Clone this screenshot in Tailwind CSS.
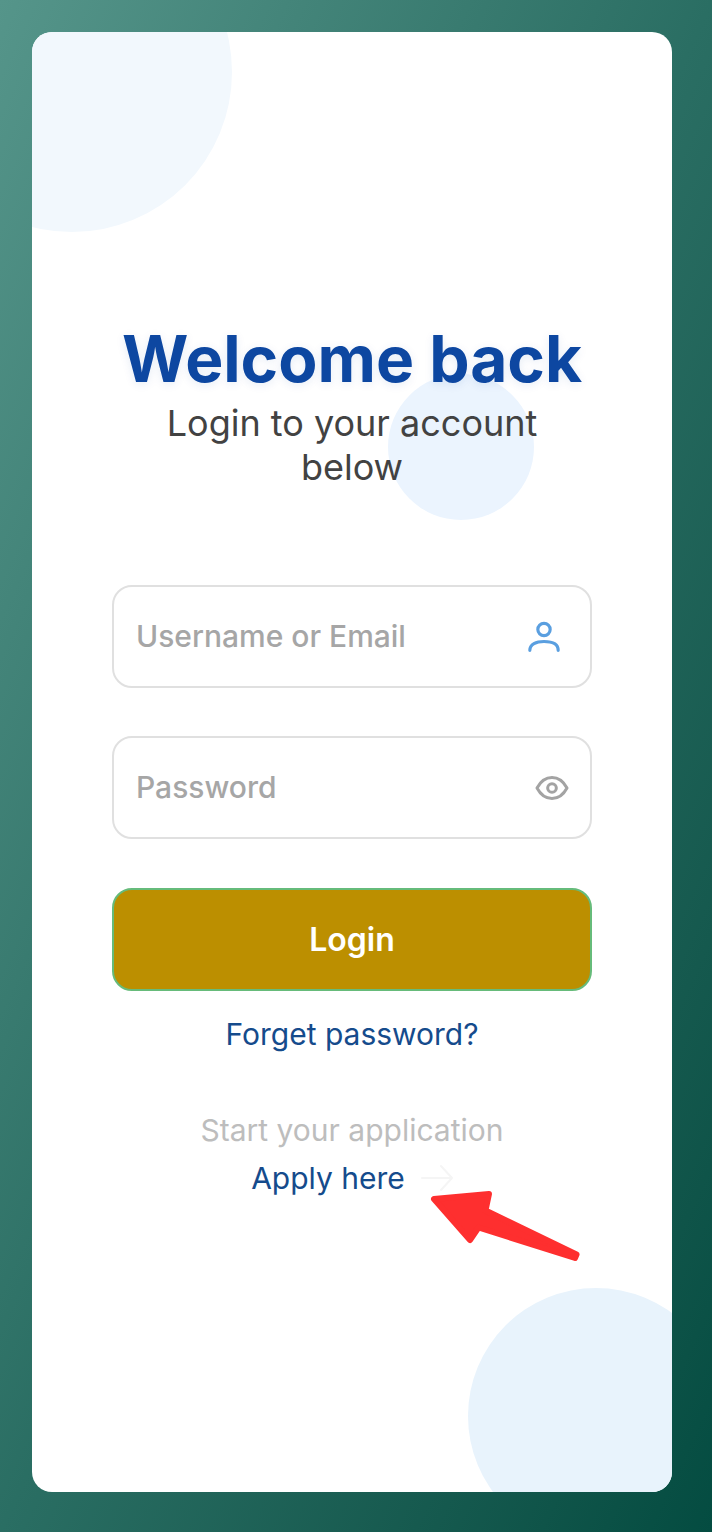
<!DOCTYPE html>
<html lang="en">
<head>
    <meta charset="UTF-8">
    <meta name="viewport" content="width=device-width, initial-scale=1.0">
    <title>Login</title>
    <script src="https://cdn.jsdelivr.net/npm/@tailwindcss/browser@4"></script>
</head>
<body class="font-['Inter',sans-serif]">
    <div class="w-[712px] h-[1532px] pl-8 pt-8 pr-10 pb-10 bg-linear-to-br from-[#55958a] via-[#2a6e63] to-[#044c41]">
        <!-- Card -->
        <div class="relative h-[1460px] bg-white rounded-[20px] overflow-hidden flex flex-col items-center pt-[285px]">
            <div class="absolute -left-[120px] -top-[120px] w-80 h-80 rounded-full bg-[#f2f8fd]"></div>
            <div class="absolute left-[356px] top-[342px] w-[146px] h-[146px] rounded-full bg-[#ebf4fe]"></div>
            <div class="absolute left-[436px] top-[1256px] w-64 h-64 rounded-full bg-[#e8f3fc]"></div>

            <h1 class="relative text-[64px] leading-[84px] font-bold text-[#0d47a1] [text-shadow:0_2px_10px_rgba(13,71,161,0.1)]">Welcome back</h1>
            <p class="relative w-[480px] text-center text-[36px] leading-[44px] text-[#424242]">Login to your account below</p>

            <!-- Form -->
            <div class="relative w-[480px] mt-[96px] flex flex-col">
                <div class="h-[103px] border-2 border-[#e0e0e0] rounded-[20px] bg-white flex items-center justify-between pl-[22px] pr-[26px]">
                    <span class="text-[30px] font-medium text-[#a6a6a6]">Username or Email</span>
                    <svg class="w-10 h-10" viewBox="0 0 24 24" fill="none" stroke="#5a9fe0" stroke-width="1.9" stroke-linecap="round">
                        <circle cx="12" cy="7.500" r="3.700"></circle>
                        <path d="M3.500 20c0-3.800 3.800-5.300 8.500-5.300s8.500 1.500 8.500 5.300"></path>
                    </svg>
                </div>
                <div class="h-[103px] mt-12 border-2 border-[#e0e0e0] rounded-[20px] bg-white flex items-center justify-between pl-[22px] pr-[18px]">
                    <span class="text-[30px] font-medium text-[#a6a6a6]">Password</span>
                    <svg class="w-10 h-10" viewBox="0 0 24 24" fill="none" stroke="#a3a3a3" stroke-width="1.800" stroke-linejoin="round">
                        <path d="M3 12c2.300-4.300 5.400-6.300 9-6.300s6.700 2 9 6.300c-2.300 4.300-5.400 6.300-9 6.300S5.300 16.300 3 12z"></path>
                        <circle cx="12" cy="12" r="2.600"></circle>
                    </svg>
                </div>
                <button class="h-[103px] mt-[49px] bg-[#bc8f00] border-2 border-[#66bb7a] rounded-[20px] text-white text-[32px] font-semibold">Login</button>
            </div>

            <a class="relative mt-[23px] text-[30px] leading-[40px] text-[#154b8c]">Forget password?</a>
            <p class="relative mt-[56px] text-[30px] leading-[40px] text-[#bdbdbd]">Start your application</p>
            <div class="relative mt-2 w-[480px] flex justify-center items-center gap-4 text-[30px] leading-[40px] text-[#154b8c]">
                <span>Apply here</span>
                <svg class="w-8 h-8" viewBox="0 0 32 32" fill="none" stroke="#f5f5f5" stroke-width="2" stroke-linecap="round" stroke-linejoin="round">
                    <path d="M1 16h30M20 4l11 12-11 12"></path>
                </svg>
            </div>

            <!-- Annotation arrow -->
            <svg class="absolute left-0 top-0 w-[640px] h-[1460px]" viewBox="32 32 640 1460" fill="#fe2f2f" stroke="#fe2f2f" stroke-width="6" stroke-linejoin="round">
                <path d="M434 1199L489 1194L485.500 1210.500L576.500 1254.500L575 1258L478.500 1227.500L470 1240z"></path>
            </svg>
        </div>
    </div>
</body>
</html>
